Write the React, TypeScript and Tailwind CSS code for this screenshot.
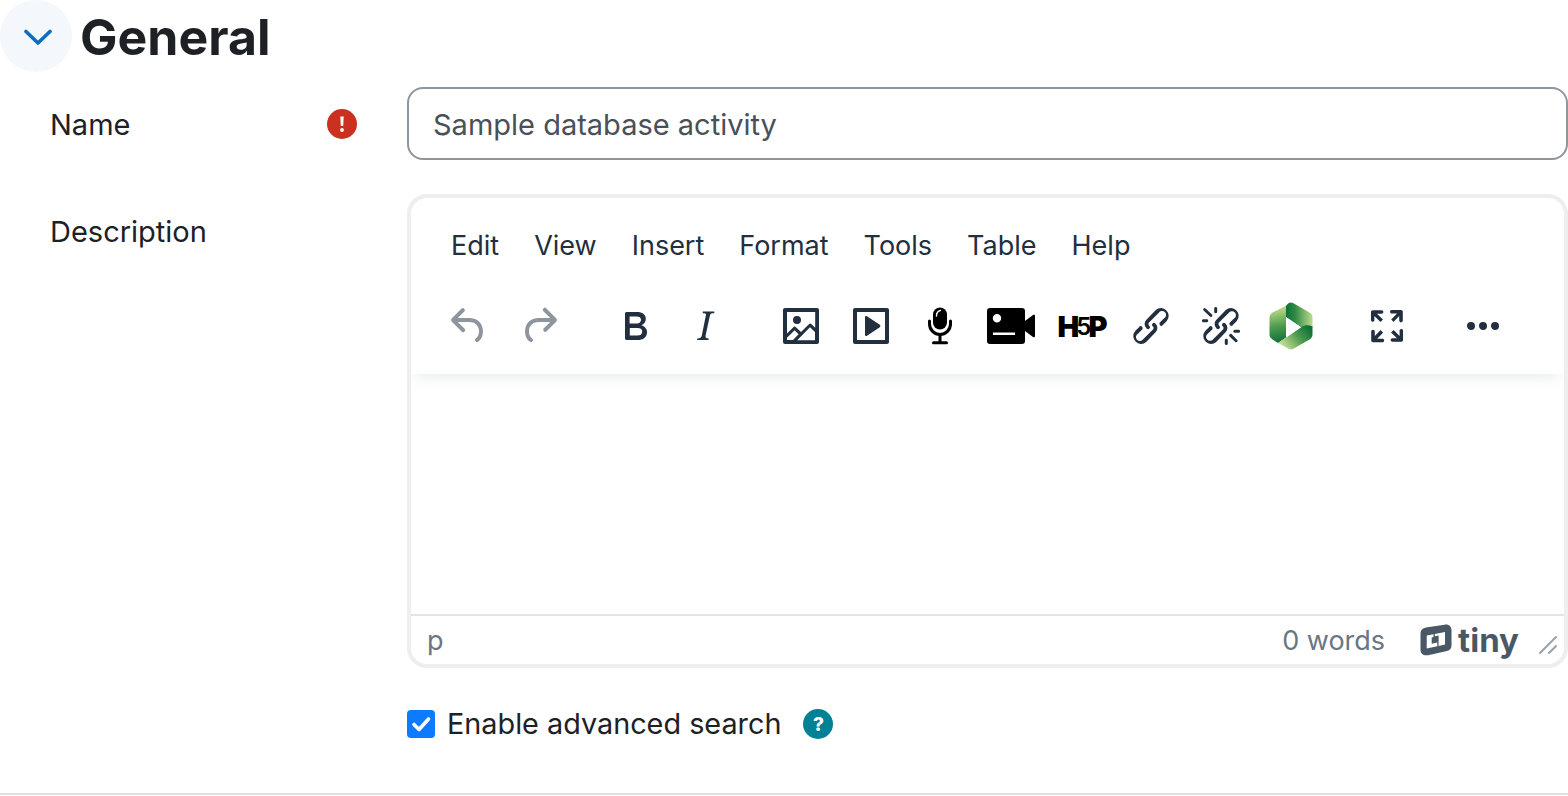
function Undo() {
    return <path d="M6.4 8H12c3.7 0 6.2 2 6.8 5.1.6 2.7-.4 5.6-2.3 6.8a1 1 0 0 1-1-1.8c1.1-.6 1.8-2.7 1.4-4.6-.5-2.1-2.1-3.5-4.9-3.5H6.4l3.3 3.3a1 1 0 1 1-1.4 1.4l-5-5a1 1 0 0 1 0-1.4l5-5a1 1 0 0 1 1.4 1.4L6.4 8z" />
}

function Redo() {
    return <path d="M17.6 10H12c-2.8 0-4.4 1.4-4.9 3.5-.4 2 .3 4 1.4 4.6a1 1 0 1 1-1 1.8c-2-1.2-2.9-4.1-2.3-6.8.6-3 3-5.1 6.8-5.1h5.6l-3.3-3.3a1 1 0 1 1 1.4-1.4l5 5a1 1 0 0 1 0 1.4l-5 5a1 1 0 0 1-1.4-1.4l3.3-3.3z" />
}

function Bold() {
    return <path d="M7.8 19c-.3 0-.5 0-.6-.2l-.2-.5V5.7c0-.2 0-.4.2-.5l.6-.2h5c1.5 0 2.7.3 3.5 1 .7.6 1.1 1.4 1.1 2.5a3 3 0 0 1-.6 1.9c-.4.6-1 1-1.6 1.2.4.1.9.3 1.3.6s.8.7 1 1.2c.4.4.5 1 .5 1.6 0 1.3-.4 2.3-1.3 3-.8.7-2.1 1-3.8 1H7.8zm5-8.3c.6 0 1.2-.1 1.6-.5.4-.3.6-.7.6-1.3 0-1.1-.8-1.7-2.3-1.7H9.3v3.5h3.4zm.5 6c.7 0 1.3-.1 1.7-.4.4-.4.6-.9.6-1.5s-.2-1-.7-1.4c-.4-.3-1-.4-2-.4H9.4v3.8h4z" />
}

function Italic() {
    return <path d="M16.7 4.7l-.1.9h-.3c-.6 0-1 0-1.4.3-.3.3-.4.6-.5 1.1l-2.1 9.8v.6c0 .5.4.8 1.4.8h.2l-.2.8H8l.2-.8h.2c1.1 0 1.8-.5 2-1.5l2-9.8.1-.5c0-.6-.4-.8-1.4-.8h-.3l.2-.9h5.8z" />
}

function Picture() {
    return <path d="M5 15.7l3.3-3.2c.3-.3.7-.3 1 0L12 15l4.1-4c.3-.4.8-.4 1 0l2 1.9V5H5v10.7zM5 18V19h3l2.8-2.9-2-2L5 17.9zm14-3l-2.5-2.4-6.4 6.5H19v-4zM4 3h16c.6 0 1 .4 1 1v16c0 .6-.4 1-1 1H4a1 1 0 0 1-1-1V4c0-.6.4-1 1-1zm6 8a2 2 0 1 0 0-4 2 2 0 0 0 0 4z" />
}

function Media() {
    return <path fillRule="evenodd" d="M4 3h16c.6 0 1 .4 1 1v16c0 .6-.4 1-1 1H4a1 1 0 0 1-1-1V4c0-.6.4-1 1-1zm1 2v14h14V5H5zm4 2.6c0-.5.5-.8 1-.5l6.4 4.3c.4.3.4.9 0 1.2L10 16.9c-.5.3-1 0-1-.5V7.6z" />
}

function Link() {
    return <path d="M6.2 12.3a1 1 0 0 1 1.4 1.4l-2 2a2 2 0 1 0 2.6 2.8l4.8-4.8a1 1 0 0 0 0-1.4 1 1 0 1 1 1.4-1.3 2.9 2.9 0 0 1 0 4L9.6 20a3.9 3.9 0 0 1-5.5-5.5l2-2zm11.6-.6a1 1 0 0 1-1.4-1.4l2-2a2 2 0 1 0-2.6-2.8L11 10.3a1 1 0 0 0 0 1.4A1 1 0 1 1 9.6 13a2.9 2.9 0 0 1 0-4L14.4 4a3.9 3.9 0 0 1 5.5 5.5l-2 2z" />
}

function Unlink() {
    return <path d="M6.2 12.3a1 1 0 0 1 1.4 1.4l-2.1 2a2 2 0 1 0 2.7 2.8l4.8-4.8a1 1 0 0 0 0-1.4 1 1 0 1 1 1.4-1.3 2.9 2.9 0 0 1 0 4L9.6 20a3.9 3.9 0 0 1-5.5-5.5l2-2zm11.6-.6a1 1 0 0 1-1.4-1.4l2.1-2a2 2 0 1 0-2.7-2.8L11 10.3a1 1 0 0 0 0 1.4A1 1 0 1 1 9.6 13a2.9 2.9 0 0 1 0-4L14.4 4a3.9 3.9 0 0 1 5.5 5.5l-2 2zM7.6 6.3a.8.8 0 0 1-1 1.1L3.3 4.2a.7.7 0 1 1 1-1l3.2 3.1zM5.1 8.6a.8.8 0 0 1 0 1.5H3a.8.8 0 0 1 0-1.5H5zm5-3.5a.8.8 0 0 1-1.5 0V3a.8.8 0 0 1 1.5 0v2zm6 11.8a.8.8 0 0 1 1-1l3.2 3.2a.8.8 0 0 1-1 1L16 17zm-2.2 2a.8.8 0 0 1 1.5 0V21a.8.8 0 0 1-1.5 0V19zm5-3.5a.7.7 0 1 1 0-1.5H21a.8.8 0 0 1 0 1.5H19z" />
}

function Fullscreen() {
    return <path d="M15.3 10l-1.2-1.3 2.9-3h-2.3a.9.9 0 1 1 0-1.7H19c.5 0 .9.4.9.9v4.4a.9.9 0 1 1-1.8 0V7l-2.9 3zm0 4l3 3v-2.3a.9.9 0 1 1 1.7 0V19c0 .5-.4.9-.9.9h-4.4a.9.9 0 1 1 0-1.8H17l-3-2.9 1.3-1.2zM10 15.4l-2.9 3h2.3a.9.9 0 1 1 0 1.7H5a.9.9 0 0 1-.9-.9v-4.4a.9.9 0 1 1 1.8 0V17l2.9-3 1.2 1.3zM8.7 10L5.7 7v2.3a.9.9 0 0 1-1.7 0V5c0-.5.4-.9.9-.9h4.4a.9.9 0 0 1 0 1.8H7l3 2.9-1.3 1.2z" />
}

function More() {
    return <path d="M6 10a2 2 0 0 0-2 2c0 1.1.9 2 2 2a2 2 0 0 0 2-2 2 2 0 0 0-2-2zm12 0a2 2 0 0 0-2 2c0 1.1.9 2 2 2a2 2 0 0 0 2-2 2 2 0 0 0-2-2zm-6 0a2 2 0 0 0-2 2c0 1.1.9 2 2 2a2 2 0 0 0 2-2 2 2 0 0 0-2-2z" />
}

function ToolIcon({ children, className = "fill-[#222f3e]" }: { children: React.ReactNode; className?: string }) {
    return (
        <button className="w-[70px] h-[48px] flex items-center justify-center shrink-0">
            <svg viewBox="0 0 24 24" className={`w-[48px] h-[48px] ${className}`}>{children}</svg>
        </button>
    )
}

function Mic() {
    return (
        <svg viewBox="0 0 26 38" className="w-[26px] h-[38px]">
            <rect x="6" y="0.500" width="14" height="22" rx="7" fill="#000" />
            <path d="M9.500 9c0-3 1.500-5 4-5.500" fill="none" stroke="#fff" strokeWidth="1.400" strokeLinecap="round" />
            <path d="M2.500 14v3a10.500 10.500 0 0 0 21 0v-3" fill="none" stroke="#000" strokeWidth="3" strokeLinecap="round" />
            <path d="M13 28v7.500M6.500 35.800h13" fill="none" stroke="#000" strokeWidth="3" strokeLinecap="round" />
        </svg>
    )
}

function Video() {
    return (
        <svg viewBox="0 0 48 36" className="w-[48px] h-[36px]">
            <path fillRule="evenodd" d="M3 0h32a3 3 0 0 1 3 3v30a3 3 0 0 1-3 3H3a3 3 0 0 1-3-3V3a3 3 0 0 1 3-3zm7 6a4.200 4.200 0 1 0 0 8.400 4.200 4.200 0 0 0 0-8.400zM6 24.500v2.500h22v-2.500H6z" fill="#000" />
            <path d="M38 13l8-6c1-.7 2-.2 2 1v20c0 1.200-1 1.700-2 1l-8-6z" fill="#000" />
        </svg>
    )
}

function Panopto() {
    return (
        <svg viewBox="0 0 44 48" className="w-[44px] h-[48px]">
            <defs>
                <linearGradient id="ribbonTop" gradientUnits="userSpaceOnUse" x1="17" y1="14" x2="43" y2="14">
                    <stop offset="0" stopColor="#0f7138" />
                    <stop offset="0.350" stopColor="#2f8a45" />
                    <stop offset="1" stopColor="#bcd98c" />
                </linearGradient>
                <linearGradient id="ribbonLeft" gradientUnits="userSpaceOnUse" x1="6" y1="8" x2="12" y2="40">
                    <stop offset="0" stopColor="#b5d585" />
                    <stop offset="0.500" stopColor="#4f9c50" />
                    <stop offset="1" stopColor="#0f7138" />
                </linearGradient>
                <linearGradient id="ribbonBottom" gradientUnits="userSpaceOnUse" x1="40" y1="26" x2="16" y2="46">
                    <stop offset="0" stopColor="#0f7138" />
                    <stop offset="0.450" stopColor="#4f9c50" />
                    <stop offset="1" stopColor="#c2dd94" />
                </linearGradient>
            </defs>
            <path d="M17 15V3.800l2.500-2.500c1.700-1 3.300-1 5 0l16 9.300c2 1.200 3 2.600 3 4.900V26L32 25.200z" fill="url(#ribbonTop)" />
            <path d="M17 3.800 3.500 10.600C1.500 11.800.5 13.300.5 15.500v17c0 2.200 1 3.700 3 4.900L9 41l8-5.500z" fill="url(#ribbonLeft)" />
            <path d="M43.500 24.500v8c0 2.200-1 3.700-3 4.900l-16 9.300c-1.700 1-3.300 1-5 0L9 41l23-15.800c4-2.400 8-2.400 11.500-.7z" fill="url(#ribbonBottom)" />
            <path d="M17 15 32 25.200 17 35.500z" fill="#fff" />
        </svg>
    )
}

function TinyLogo() {
    return (
        <svg viewBox="0 0 32 32" className="w-[32px] h-[32px]">
            <path d="M6 3.500 24.500.700C29 0 31.500 2.500 31.500 6.500v15c0 3-1.500 4.800-4.500 5.500L8 31.200c-4.500.8-7.500-1.500-7.500-5.700V9.500C.5 6 2.500 4 6 3.500z" fill="#4a5766" />
            <path d="M6.700 11.500 13.500 10.200V13L11.700 13.400V19.800L17.300 18.600V22.300L6.700 24.600z" fill="#fff" />
            <path d="M14.800 10 25 8V20.500L18.600 22V11.400L14.800 12.200z" fill="#fff" />
        </svg>
    )
}

export default function App() {
    const font = "font-['Inter',sans-serif]"
    return (
        <div className={`${font} w-[1568px] h-[796px] overflow-hidden bg-white flex flex-col`}>
            <div className="flex items-center gap-[8px] h-[72px] shrink-0">
                <button className="w-[72px] h-[72px] rounded-full bg-[#f4f8fc] flex items-center justify-center shrink-0">
                    <svg viewBox="0 0 28 16" className="w-[28px] h-[16px] ml-[3px] mt-[1px]">
                        <path d="M2 2.500 14 14 26 2.500" fill="none" stroke="#0f6cbf" strokeWidth="3.600" strokeLinecap="round" strokeLinejoin="round" />
                    </svg>
                </button>
                <h2 className="text-[50px] leading-none font-bold text-[#1d2125] mt-[2px]">General</h2>
            </div>

            <div className="flex mt-[15px] items-center h-[73px] shrink-0">
                <div className="w-[407px] shrink-0 flex items-center pl-[50px] pr-[50px]">
                    <span className="text-[29px] text-[#1d2125] mt-[2px]">Name</span>
                    <span className="ml-auto w-[30px] h-[30px] rounded-full bg-[#ca3120] text-white flex items-center justify-center">
                        <svg viewBox="0 0 30 30" className="w-[30px] h-[30px]">
                            <path d="M13.300 7.500h3.400l-.5 9.500h-2.400z" fill="#fff" />
                            <circle cx="15" cy="21" r="1.900" fill="#fff" />
                        </svg>
                    </span>
                </div>
                <div className="flex-1 h-[73px] border-2 border-[#8f959e] rounded-[16px] flex items-center pl-[24px]">
                    <span className="text-[29px] text-[#495057] mt-[2px]">Sample database activity</span>
                </div>
            </div>

            <div className="flex mt-[34px] shrink-0">
                <div className="w-[407px] shrink-0 pl-[50px] pt-[16px]">
                    <span className="text-[29px] text-[#1d2125]">Description</span>
                </div>
                <div className="flex-1 h-[474px] border-[4px] border-[#eeeeee] rounded-[20px] flex flex-col overflow-hidden">
                    <div className="h-[176px] shrink-0 shadow-[0_8px_14px_-6px_rgba(34,47,62,0.12)] relative">
                        <div className="flex items-center gap-[35px] pl-[40px] pt-[29px] text-[27px] leading-[38px] text-[#222f3e]">
                            <span>Edit</span>
                            <span>View</span>
                            <span>Insert</span>
                            <span>Format</span>
                            <span>Tools</span>
                            <span>Table</span>
                            <span>Help</span>
                        </div>
                        <div className="flex items-center pl-[23px] mt-[37px] h-[48px]">
                            <ToolIcon className="fill-[#8f959e]"><Undo /></ToolIcon>
                            <ToolIcon className="fill-[#8f959e]"><Redo /></ToolIcon>
                            <div className="ml-[26px]"><ToolIcon><Bold /></ToolIcon></div>
                            <ToolIcon><Italic /></ToolIcon>
                            <div className="ml-[26px]"><ToolIcon><Picture /></ToolIcon></div>
                            <ToolIcon><Media /></ToolIcon>
                            <div className="w-[69px] pr-[2px] flex justify-center"><Mic /></div>
                            <div className="w-[71px] flex justify-center"><Video /></div>
                            <div className="w-[70px] flex justify-center items-center text-[29px] font-black text-black leading-none tracking-[-3px]">H<span className="text-[24px] font-semibold mt-[2px]">5</span>P</div>
                            <ToolIcon><Link /></ToolIcon>
                            <ToolIcon><Unlink /></ToolIcon>
                            <div className="w-[70px] flex justify-center"><Panopto /></div>
                            <div className="ml-[26px]"><ToolIcon><Fullscreen /></ToolIcon></div>
                            <div className="ml-[26px]"><ToolIcon><More /></ToolIcon></div>
                        </div>
                    </div>
                    <div className="flex-1" />
                    <div className="h-[50px] shrink-0 border-t-2 border-[#e3e3e3] flex items-center pl-[16px] pr-[6px] text-[#6a7684]">
                        <span className="text-[27px] mt-[3px]">p</span>
                        <span className="text-[27px] ml-auto mt-[3px]">0 words</span>
                        <div className="flex items-center gap-[6px] ml-[35px]">
                            <TinyLogo />
                            <span className="text-[33px] leading-none font-bold text-[#4a5766]">tiny</span>
                        </div>
                        <svg viewBox="0 0 20 20" className="w-[20px] h-[20px] ml-[19px] mt-[10px]">
                            <path d="M2 18 18 2M11 18l7-7" fill="none" stroke="#9aa1a9" strokeWidth="2" strokeLinecap="round" />
                        </svg>
                    </div>
                </div>
            </div>

            <div className="flex items-center mt-[42px] ml-[407px] h-[28px] shrink-0">
                <span className="w-[28px] h-[28px] rounded-[4px] bg-[#0d7bff] flex items-center justify-center">
                    <svg viewBox="0 0 28 28" className="w-[28px] h-[28px]">
                        <path d="M7 14.500 12 19.500 21.500 9" fill="none" stroke="#fff" strokeWidth="3.600" strokeLinecap="round" strokeLinejoin="round" />
                    </svg>
                </span>
                <span className="ml-[12px] text-[28.800px] text-[#1d2125]">Enable advanced search</span>
                <span className="ml-[22px] w-[30px] h-[30px] rounded-full bg-[#008196] text-white flex items-center justify-center text-[19px] font-extrabold leading-none">?</span>
            </div>

            <div className="mt-auto mb-[1px] h-[2px] bg-[#dee2e6] shrink-0" />
        </div>
    )
}
